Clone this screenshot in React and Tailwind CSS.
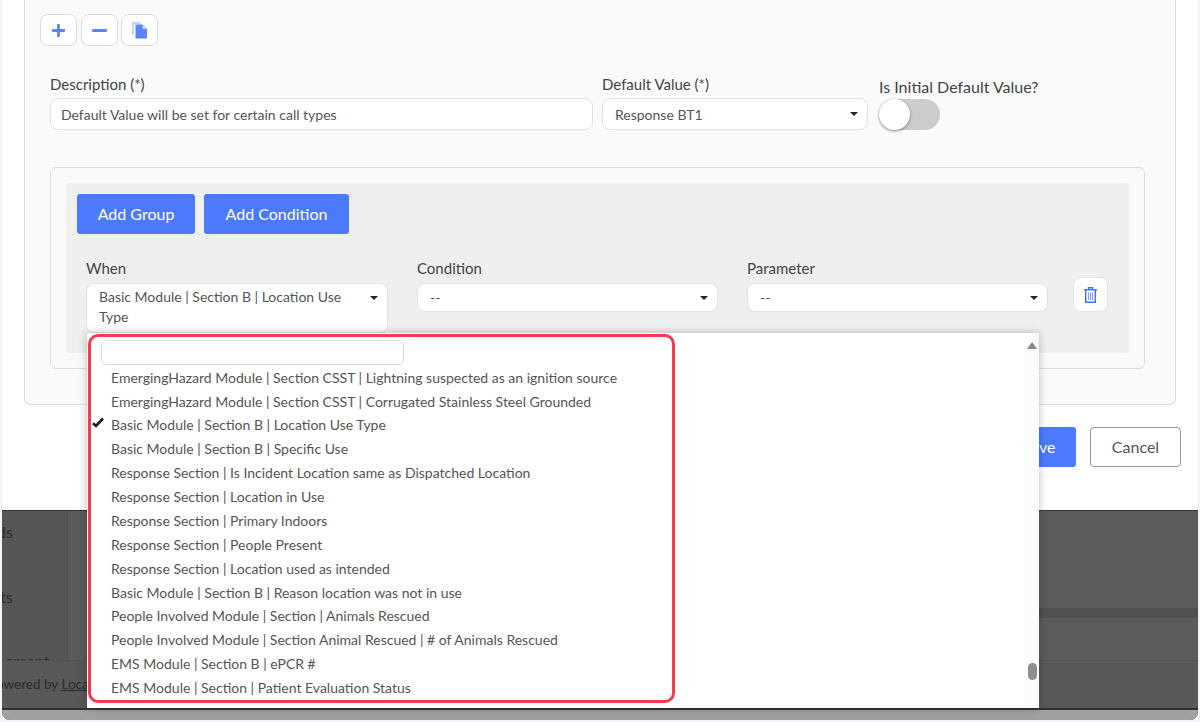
import { FaPlus, FaMinus } from "react-icons/fa";

const OPTIONS = [
  "EmergingHazard Module | Section CSST | Lightning suspected as an ignition source",
  "EmergingHazard Module | Section CSST | Corrugated Stainless Steel Grounded",
  "Basic Module | Section B | Location Use Type",
  "Basic Module | Section B | Specific Use",
  "Response Section | Is Incident Location same as Dispatched Location",
  "Response Section | Location in Use",
  "Response Section | Primary Indoors",
  "Response Section | People Present",
  "Response Section | Location used as intended",
  "Basic Module | Section B | Reason location was not in use",
  "People Involved Module | Section | Animals Rescued",
  "People Involved Module | Section Animal Rescued | # of Animals Rescued",
  "EMS Module | Section B | ePCR #",
  "EMS Module | Section | Patient Evaluation Status",
];

function Caret({ className = "" }) {
  return <span className={`h-0 w-0 border-x-[4px] border-t-[4px] border-x-transparent border-t-[#222] ${className}`} />;
}

function IconButton({ children, className = "" }) {
  return (
    <button type="button" className={`flex h-[32px] w-[37px] items-center justify-center rounded-[8px] border border-[#dddddd] bg-white text-[#5b82ff] ${className}`}>
      {children}
    </button>
  );
}

function CopyIcon() {
  return (
    <svg width="16" height="17" viewBox="0 0 16 17" fill="#5b82ff">
      <path d="M0.5 0.5h8v1h-7v11h-1z" fill="#8aa5ff" />
      <path d="M3.5 2.5h7l4.5 4.5v9.5h-11.500z" />
      <path d="M10.500 2.500v4.500h4.500z" fill="#c9d6ff" />
    </svg>
  );
}

function TrashIcon() {
  return (
    <svg width="13" height="16" viewBox="0 0 13 16" fill="none" stroke="#3f6fff" strokeWidth="1.4">
      <path d="M0 2.800h13" />
      <path d="M4.500 2.500V0.800h4V2.500" />
      <path d="M1.700 3V15.300h9.600V3" />
      <path d="M4.500 5.500v7.500M6.500 5.500v7.500M8.500 5.500v7.500" strokeWidth="1.100" stroke="#7f9dff" />
    </svg>
  );
}

function SelectBox({ value, className = "" }) {
  return (
    <div className={`flex h-[29px] w-[301px] items-center justify-between rounded-[8px] border border-[#e2e2e2] bg-white pl-[12px] pr-[9px] text-[14px] text-[#555] ${className}`}>
      <span>{value}</span>
      <Caret />
    </div>
  );
}

function Field({ label, children }) {
  return (
    <div>
      <div className="mb-[4px] text-[15px] leading-[22px] text-[#444]">{label}</div>
      {children}
    </div>
  );
}

export default function App() {
  return (
    <div className="relative h-[722px] w-[1200px] overflow-hidden bg-[#f5f5f9] px-[2px] pb-[2px] font-['Lato',sans-serif]">
      <div className="flex h-full flex-col overflow-hidden rounded-b-[8px]">
        {/* modal */}
        <div className="h-[510px] shrink-0 rounded-b-[8px] bg-white px-[22px]">
          <div className="h-[405px] rounded-b-[6px] border-x border-b border-[#dddddd] bg-[#fafafa] pl-[15px] pr-[25px] pt-[14px]">
            <div className="flex gap-[3.5px]">
              <IconButton><FaPlus size={15} /></IconButton>
              <IconButton><FaMinus size={17} /></IconButton>
              <IconButton><CopyIcon /></IconButton>
            </div>

            <div className="mt-[27px] flex pl-[10px]">
              <div className="w-[543px]">
                <div className="mb-[3px] text-[15px] leading-[22px] text-[#444]">Description (*)</div>
                <div className="flex h-[32px] items-center rounded-[8px] border border-[#e2e2e2] bg-white pl-[10px] text-[14px] text-[#555]">
                  Default Value will be set for certain call types
                </div>
              </div>
              <div className="ml-[9px] w-[266px]">
                <div className="mb-[3px] text-[15px] leading-[22px] text-[#444]">Default Value (*)</div>
                <SelectBox value="Response BT1" className="!h-[32px] !w-[266px]" />
              </div>
              <div className="ml-[11px] mt-[2px]">
                <div className="whitespace-nowrap text-[16px] leading-[24px] text-[#444]">Is Initial Default Value?</div>
                <div className="h-[31px] w-[61px] rounded-full bg-[#cccccc]">
                  <div className="h-[31px] w-[31px] rounded-full bg-white shadow-[0_1px_3px_rgba(0,0,0,0.45)]" />
                </div>
              </div>
            </div>

            <div className="ml-[10px] mt-[37px] h-[202px] w-[1095px] rounded-[6px] border border-[#dddddd] bg-[#fafafa] p-[15px]">
              <div className="h-[170px] rounded-[4px] bg-[#efefef] pl-[11px] pr-[10px] pt-[11px]">
                <div className="flex gap-[9px]">
                  <button type="button" className="h-[40px] w-[118px] rounded-[3px] bg-[#4d79ff] text-[16px] text-white">Add Group</button>
                  <button type="button" className="h-[40px] w-[145px] rounded-[3px] bg-[#4d79ff] text-[16px] text-white">Add Condition</button>
                </div>
                <div className="mt-[23px] flex items-start pl-[9px]">
                  <div className="mr-[29px]">
                    <Field label="When">
                      <div className="flex h-[50px] w-[302px] justify-between rounded-[8px] border border-[#e2e2e2] bg-white py-[3px] pl-[12px] pr-[9px] text-[14px] leading-[20px] text-[#555]">
                        <span className="w-[260px]">Basic Module | Section B | Location Use Type</span>
                        <Caret className="mt-[9px]" />
                      </div>
                    </Field>
                  </div>
                  <div className="mr-[29px]">
                    <Field label="Condition"><SelectBox value="--" /></Field>
                  </div>
                  <div className="mr-[25px]">
                    <Field label="Parameter"><SelectBox value="--" /></Field>
                  </div>
                  <button type="button" className="mt-[20px] flex h-[35px] w-[35px] items-center justify-center rounded-[8px] border border-[#e4e4e4] bg-white">
                    <TrashIcon />
                  </button>
                </div>
              </div>
            </div>
          </div>

          <div className="mt-[22px] flex justify-end gap-[14px]">
            <button type="button" className="h-[40px] w-[74px] rounded-[3px] bg-[#4d79ff] text-[16px] text-white">Save</button>
            <button type="button" className="mr-[-5px] h-[40px] w-[91px] rounded-[4px] border border-[#999] bg-white text-[16px] text-[#555]">Cancel</button>
          </div>
        </div>

        {/* page behind the modal */}
        <div className="flex min-h-0 flex-1 flex-col border-t border-[#333] bg-[#5a5a5a] text-[16px] leading-[24px] text-[#2b2b2b]">
          <div className="flex min-h-0 flex-1">
            <div className="h-full w-[66px] shrink-0 overflow-hidden border-r border-[#525252] bg-[#565656]">
              <div className="ml-[-5px] mt-[9px]">ds</div>
              <div className="ml-[-2px] mt-[41px]">ts</div>
              <div className="ml-[3px] mt-[40px] whitespace-nowrap">ement</div>
            </div>
            <div className="flex flex-1 flex-col bg-[#5b5b5b] pl-[60px]">
              <div className="h-[97px]" />
              <div className="h-[10px] bg-[#505050]" />
            </div>
          </div>
          <div className="h-[48px] shrink-0 border-t border-[#525252] bg-[#585858] pt-[13px] text-[13.5px] leading-[20px]">
            <div className="ml-[-6px] whitespace-nowrap">owered by <span className="underline">Local</span></div>
          </div>
          <div className="h-[12px] shrink-0 border-t-[2px] border-[#333] bg-[#a0a0a0]" />
        </div>
      </div>

      {/* open dropdown */}
      <div className="absolute left-[87px] top-[333px] h-[375px] w-[952px] overflow-hidden rounded-t-[3px] bg-white shadow-[0_0_8px_rgba(0,0,0,0.25)]">
        <div className="pl-[14px] pt-[7px]">
          <div className="h-[25px] w-[303px] rounded-[5px] border border-[#dddddd] bg-white" />
        </div>
        <ul className="mt-[0.7px] text-[14px] leading-[23.87px] text-[#555]">
          {OPTIONS.map((option, index) => (
            <li key={option} className="relative whitespace-nowrap pl-[24px]">
              {index === 2 && (
                <svg width="12" height="11" viewBox="0 0 12 11" className="absolute left-[5px] top-[4px]">
                  <path d="M1 6.200 L4 9 L11 1.500" fill="none" stroke="#1c1c1c" strokeWidth="2.600" />
                </svg>
              )}
              {option}
            </li>
          ))}
        </ul>
        <div className="absolute right-0 top-0 flex h-full w-[14px] flex-col items-center bg-[#fcfcfc]">
          <span className="mt-[9px] h-0 w-0 border-x-[5px] border-b-[7px] border-x-transparent border-b-[#888]" />
          <span className="mt-[314px] h-[17px] w-[9px] rounded-full bg-[#8f8f8f]" />
        </div>
      </div>

      {/* red callout */}
      <div className="pointer-events-none absolute left-[88px] top-[334px] h-[369px] w-[587px] rounded-[10px] border-[3px] border-[#f23a50]" />
    </div>
  );
}
